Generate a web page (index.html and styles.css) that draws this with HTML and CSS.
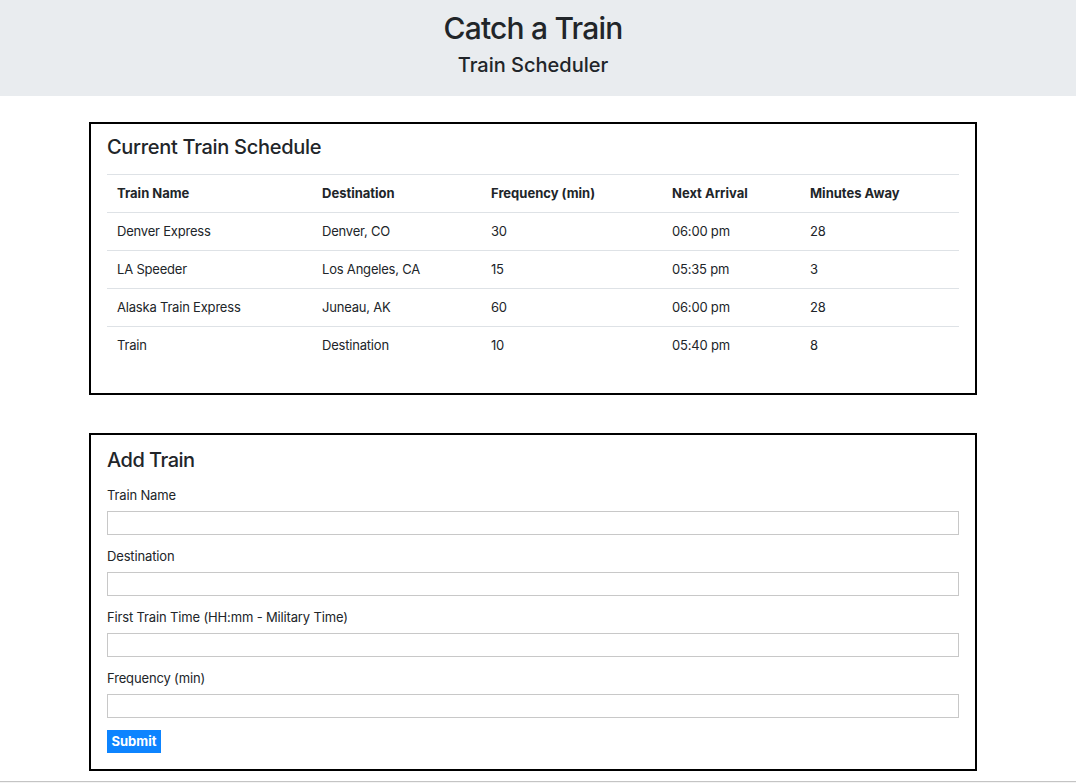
FILE: index.html
```html
<!DOCTYPE html>
<html lang="en">
<head>
<meta charset="utf-8">
<title>Catch a Train</title>
<link rel="stylesheet" href="styles.css">
</head>
<body>
<header class="hero">
  <h1 class="hero-title">Catch a Train</h1>
  <h2 class="hero-sub">Train Scheduler</h2>
</header>

<main class="main">
  <section class="box">
    <h3 class="box-title">Current Train Schedule</h3>
    <table class="schedule">
      <colgroup>
        <col class="c1"><col class="c2"><col class="c3"><col class="c4"><col class="c5">
      </colgroup>
      <thead>
        <tr><th>Train Name</th><th>Destination</th><th>Frequency (min)</th><th>Next Arrival</th><th>Minutes Away</th></tr>
      </thead>
      <tbody>
        <tr><td>Denver Express</td><td>Denver, CO</td><td>30</td><td>06:00 pm</td><td>28</td></tr>
        <tr><td>LA Speeder</td><td>Los Angeles, CA</td><td>15</td><td>05:35 pm</td><td>3</td></tr>
        <tr><td>Alaska Train Express</td><td>Juneau, AK</td><td>60</td><td>06:00 pm</td><td>28</td></tr>
        <tr><td>Train</td><td>Destination</td><td>10</td><td>05:40 pm</td><td>8</td></tr>
      </tbody>
    </table>
  </section>

  <section class="box box-form">
    <h3 class="box-title">Add Train</h3>
    <form class="form">
      <div class="field">
        <label class="label" for="name">Train Name</label>
        <input class="input" id="name" type="text">
      </div>
      <div class="field">
        <label class="label" for="dest">Destination</label>
        <input class="input" id="dest" type="text">
      </div>
      <div class="field">
        <label class="label" for="first">First Train Time (HH:mm - Military Time)</label>
        <input class="input" id="first" type="text">
      </div>
      <div class="field">
        <label class="label" for="freq">Frequency (min)</label>
        <input class="input" id="freq" type="text">
      </div>
      <button class="btn" type="button">Submit</button>
    </form>
  </section>
</main>
<div class="bottom-rule"></div>
</body>
</html>
```

FILE: styles.css
```css
html, body {
  margin: 0;
  padding: 0;
  background: #ffffff;
}
body {
  font-family: Inter, "Noto Sans", "Liberation Sans", sans-serif;
  color: #212529;
  overflow: hidden;
}
.hero {
  background: #e9ecef;
  height: 96px;
  box-sizing: border-box;
  padding: 10px 10px 0 0;
  text-align: center;
}
.hero-title {
  margin: 0;
  font-size: 30px;
  line-height: 36px;
  font-weight: 500;
  letter-spacing: -0.8px;
}
.hero-sub {
  margin: 7px 0 0;
  font-size: 20px;
  line-height: 24px;
  font-weight: 500;
}
.main {
  padding-right: 10px;
}
.box {
  width: 888px;
  box-sizing: border-box;
  margin: 26px auto 0;
  border: 2px solid #000;
  padding: 11px 16px 13px;
}
.box-form {
  margin-top: 38px;
  padding-top: 13px;
  padding-bottom: 16px;
}
.box-title {
  margin: 0 0 15px;
  font-size: 20px;
  line-height: 24px;
  font-weight: 500;
  letter-spacing: -0.3px;
}
.box-form .box-title {
  margin-bottom: 13px;
  letter-spacing: -0.5px;
}
.schedule {
  width: 100%;
  border-collapse: collapse;
  table-layout: fixed;
  font-size: 13px;
  margin-bottom: 16px;
}
.c1 { width: 205px; }
.c2 { width: 169px; }
.c3 { width: 181px; }
.c4 { width: 138px; }
.c5 { width: 159px; }
.schedule th,
.schedule td {
  text-align: left;
  border-top: 1px solid #dee2e6;
  padding: 9px 10px;
  line-height: 19px;
  height: 19px;
}
.schedule td {
  letter-spacing: -0.2px;
}
.schedule th {
  font-weight: 700;
}
.form {
  margin: 0;
}
.field {
  margin-bottom: 11px;
}
.field:last-of-type {
  margin-bottom: 12px;
}
.label {
  display: block;
  font-size: 13px;
  line-height: 20px;
  margin-bottom: 6px;
  letter-spacing: -0.15px;
}
.input {
  display: block;
  width: 100%;
  height: 24px;
  box-sizing: border-box;
  margin: 0;
  border: 1px solid #c8c8c8;
  border-radius: 0;
  background: #fff;
  font-family: inherit;
  font-size: 13px;
  padding: 2px 6px;
}
.btn {
  display: block;
  height: 23px;
  width: 54px;
  padding: 0;
  border: 0;
  border-radius: 0;
  background: #0d84ff;
  color: #fff;
  font-family: inherit;
  font-size: 13px;
  font-weight: 700;
  line-height: 23px;
}
.bottom-rule {
  margin-top: 10px;
  border-top: 1px solid #c4c4c4;
  height: 2px;
  background: #f4f4f4;
}
```
